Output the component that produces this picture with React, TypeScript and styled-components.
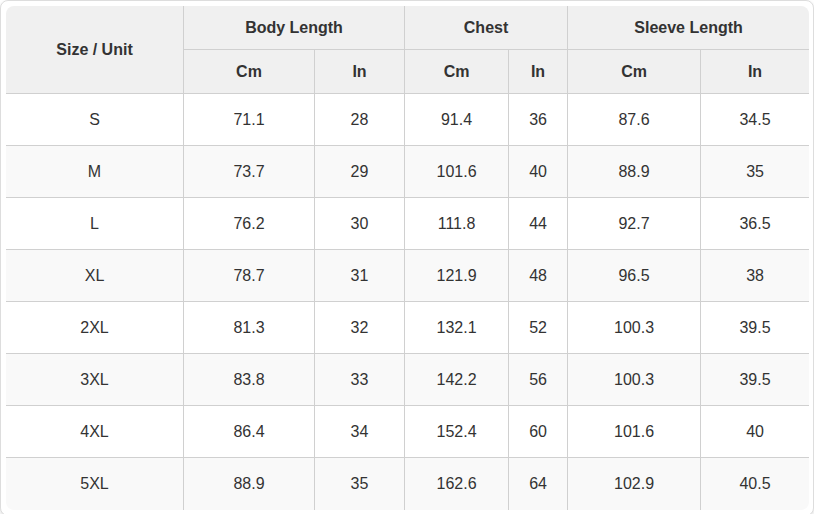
import React from "react";
import styled, { createGlobalStyle } from "styled-components";

const Global = createGlobalStyle`
  html, body { margin: 0; padding: 0; background: #ffffff; }
  body { font-family: "Liberation Sans", Arial, sans-serif; }
`;

const Wrapper = styled.div`
  box-sizing: border-box;
  width: 814px;
  padding: 5px;
  border: 1px solid #dddddd;
  border-radius: 8px;
  background: #ffffff;
  box-shadow: 0 2px 4px rgba(0, 0, 0, 0.12);
`;

const Table = styled.table`
  width: 803px;
  table-layout: fixed;
  border-collapse: separate;
  border-spacing: 0;
  border-radius: 8px;
  overflow: hidden;
  font-size: 16px;
  color: #333333;
`;

const HeadCell = styled.th<{ $last?: boolean }>`
  box-sizing: border-box;
  height: 44px;
  padding: 0;
  background: #f0f0f0;
  font-weight: bold;
  text-align: center;
  vertical-align: middle;
  border-bottom: 1px solid #d0d0d0;
  border-right: ${(p) => (p.$last ? "none" : "1px solid #d0d0d0")};
`;

const Row = styled.tr<{ $alt: boolean }>`
  background: ${(p) => (p.$alt ? "#f9f9f9" : "#ffffff")};
`;

const Cell = styled.td<{ $last?: boolean; $bottom?: boolean }>`
  box-sizing: border-box;
  height: 52px;
  padding: 0;
  text-align: center;
  vertical-align: middle;
  border-bottom: ${(p) => (p.$bottom ? "none" : "1px solid #d0d0d0")};
  border-right: ${(p) => (p.$last ? "none" : "1px solid #d0d0d0")};
`;

const widths = [178, 131, 90, 104, 59, 133, 108];

const rows: string[][] = [
  ["S", "71.1", "28", "91.4", "36", "87.6", "34.5"],
  ["M", "73.7", "29", "101.6", "40", "88.9", "35"],
  ["L", "76.2", "30", "111.8", "44", "92.7", "36.5"],
  ["XL", "78.7", "31", "121.9", "48", "96.5", "38"],
  ["2XL", "81.3", "32", "132.1", "52", "100.3", "39.5"],
  ["3XL", "83.8", "33", "142.2", "56", "100.3", "39.5"],
  ["4XL", "86.4", "34", "152.4", "60", "101.6", "40"],
  ["5XL", "88.9", "35", "162.6", "64", "102.9", "40.5"],
];

export default function App() {
  return (
    <>
      <Global />
      <Wrapper>
        <Table>
          <colgroup>
            {widths.map((w, i) => (
              <col key={i} style={{ width: w }} />
            ))}
          </colgroup>
          <thead>
            <tr>
              <HeadCell rowSpan={2}>Size / Unit</HeadCell>
              <HeadCell colSpan={2}>Body Length</HeadCell>
              <HeadCell colSpan={2}>Chest</HeadCell>
              <HeadCell colSpan={2} $last>
                Sleeve Length
              </HeadCell>
            </tr>
            <tr>
              <HeadCell>Cm</HeadCell>
              <HeadCell>In</HeadCell>
              <HeadCell>Cm</HeadCell>
              <HeadCell>In</HeadCell>
              <HeadCell>Cm</HeadCell>
              <HeadCell $last>In</HeadCell>
            </tr>
          </thead>
          <tbody>
            {rows.map((r, ri) => (
              <Row key={ri} $alt={ri % 2 === 1}>
                {r.map((v, ci) => (
                  <Cell
                    key={ci}
                    $last={ci === r.length - 1}
                    $bottom={ri === rows.length - 1}
                  >
                    {v}
                  </Cell>
                ))}
              </Row>
            ))}
          </tbody>
        </Table>
      </Wrapper>
    </>
  );
}
